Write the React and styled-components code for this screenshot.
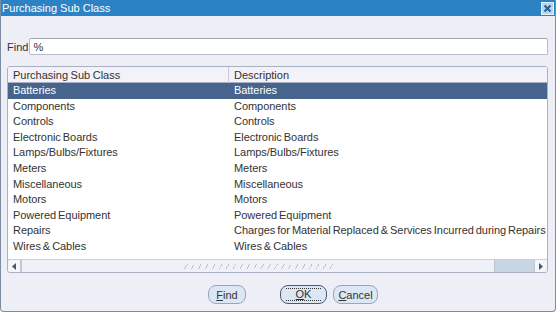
import React from "react";
import styled, { createGlobalStyle } from "styled-components";

const Global = createGlobalStyle`
  html, body { margin: 0; padding: 0; background: #ffffff; }
  body { font-family: "Liberation Sans", Arial, sans-serif; }
`;

const Window = styled.div`
  width: 556px;
  height: 312px;
  box-sizing: border-box;
  display: flex;
  flex-direction: column;
  background: #eeeef6;
  border: 1px solid #7d8ca0;
  border-top: none;
  border-radius: 0 0 4px 4px;
  overflow: hidden;
`;

const TitleBar = styled.div`
  height: 16px;
  flex: none;
  background: #2b83c6;
  color: #ffffff;
  font-size: 11px;
  display: flex;
  align-items: center;
  justify-content: space-between;
  padding: 0 1px 0 2px;
  margin-left: -1px;
  margin-right: -1px;
`;

const Close = styled.div`
  width: 11px;
  height: 11px;
  border: 1px solid #e8f0f8;
  background: #b9d6ee;
  display: flex;
  align-items: center;
  justify-content: center;
  margin-right: 1px;
`;

const FindRow = styled.div`
  display: flex;
  align-items: center;
  margin: 22px 0 0 6px;
  gap: 1px;
  font-size: 11px;
  color: #333333;
`;

const FindInput = styled.div`
  width: 519px;
  height: 17px;
  box-sizing: border-box;
  background: #ffffff;
  border: 1px solid #b8bcc8;
  border-top-color: #9ea4b2;
  border-radius: 2px;
  font-size: 11px;
  padding: 2px 3px;
  color: #333333;
`;

const Table = styled.div`
  margin: 11px 0 0 6px;
  width: 541px;
  height: 207px;
  box-sizing: border-box;
  border: 1px solid #a9b1c2;
  border-radius: 3px;
  background: #ffffff;
  display: flex;
  flex-direction: column;
  overflow: hidden;
`;

const Header = styled.div`
  display: grid;
  grid-template-columns: 221px 1fr;
  height: 16px;
  flex: none;
  background: #f2f2f8;
  border-bottom: 1px solid #a9b1c2;
  box-sizing: border-box;
`;

const HeaderCell = styled.div`
  font-size: 11px;
  color: #333333;
  padding-left: 5px;
  line-height: 16px;
  word-spacing: -0.5px;
  border-right: ${(p) => (p.$divider ? "1px solid #c8ccd8" : "none")};
`;

const Rows = styled.div`
  flex: 1;
  display: flex;
  flex-direction: column;
`;

const Row = styled.div`
  display: grid;
  grid-template-columns: 221px 1fr;
  height: 15.6px;
  flex: none;
  background: ${(p) => (p.$selected ? "#46648c" : "transparent")};
  color: ${(p) => (p.$selected ? "#ffffff" : "#333333")};
  font-size: 11px;
  line-height: 15.6px;
`;

const Cell = styled.div`
  padding-left: 5px;
  white-space: nowrap;
  overflow: hidden;
  word-spacing: -1px;
  letter-spacing: -0.05px;
`;

const ScrollBar = styled.div`
  height: 13px;
  flex: none;
  display: flex;
  border-top: 1px solid #c9d2e0;
  background: #e9edf5;
  box-sizing: border-box;
`;

const Arrow = styled.div`
  width: 12px;
  flex: none;
  display: flex;
  align-items: center;
  justify-content: center;
  background: #f4f6fa;
  border-right: ${(p) => (p.$left ? "2px solid #c0c8d6" : "none")};
  border-left: ${(p) => (p.$left ? "none" : "1px solid #c0c8d6")};
  border-radius: ${(p) => (p.$left ? "4px 0 0 4px" : "0 4px 4px 0")};
`;

const Thumb = styled.div`
  width: 472px;
  flex: none;
  background: #eef1f7;
  display: flex;
  align-items: center;
  justify-content: center;
  border-right: 1px solid #b8c4d4;
`;

const Grip = styled.div`
  width: 152px;
  height: 5px;
  margin-left: 4px;
  background-image: repeating-linear-gradient(
    120deg,
    transparent 0px,
    transparent 2.5px,
    #b8c0cc 2.5px,
    #b8c0cc 3.3px,
    transparent 3.3px,
    transparent 6px
  );
`;

const Track = styled.div`
  flex: 1;
  background: #c8d5e5;
`;

const ButtonRow = styled.div`
  display: flex;
  align-items: center;
  margin: 12px 0 0 207px;
`;

const Button = styled.div`
  height: 19px;
  box-sizing: border-box;
  width: ${(p) => p.$w}px;
  margin-left: ${(p) => p.$ml || 0}px;
  border: 1px solid ${(p) => (p.$default ? "#4a5a70" : "#9aa6b8")};
  border-radius: 8px;
  background: #dbe7f4;
  font-size: 11px;
  color: #333333;
  display: flex;
  align-items: center;
  justify-content: center;
`;

const FocusRing = styled.span`
  border-top: 1px dotted #333;
  border-bottom: 1px dotted #333;
  padding: 0 10px;
  line-height: 11px;
`;

const U = styled.span`
  text-decoration: underline;
`;

const rows = [
  ["Batteries", "Batteries"],
  ["Components", "Components"],
  ["Controls", "Controls"],
  ["Electronic Boards", "Electronic Boards"],
  ["Lamps/Bulbs/Fixtures", "Lamps/Bulbs/Fixtures"],
  ["Meters", "Meters"],
  ["Miscellaneous", "Miscellaneous"],
  ["Motors", "Motors"],
  ["Powered Equipment", "Powered Equipment"],
  ["Repairs", "Charges for Material Replaced & Services Incurred during Repairs"],
  ["Wires & Cables", "Wires & Cables"],
];

export default function App() {
  return (
    <>
      <Global />
      <Window>
        <TitleBar>
          <span>Purchasing Sub Class</span>
          <Close>
            <svg width="9" height="9" viewBox="0 0 9 9">
              <path d="M1.5 1.5 L7.5 7.5 M7.5 1.5 L1.5 7.5" stroke="#2a5f92" strokeWidth="2" />
            </svg>
          </Close>
        </TitleBar>
        <FindRow>
          <span>Find</span>
          <FindInput>%</FindInput>
        </FindRow>
        <Table>
          <Header>
            <HeaderCell $divider>Purchasing Sub Class</HeaderCell>
            <HeaderCell>Description</HeaderCell>
          </Header>
          <Rows>
            {rows.map(([a, b], i) => (
              <Row key={a} $selected={i === 0}>
                <Cell>{a}</Cell>
                <Cell>{b}</Cell>
              </Row>
            ))}
          </Rows>
          <ScrollBar>
            <Arrow $left>
              <svg width="4" height="7" viewBox="0 0 4 7">
                <path d="M4 0 L0 3.5 L4 7 Z" fill="#4a5568" />
              </svg>
            </Arrow>
            <Thumb>
              <Grip />
            </Thumb>
            <Track />
            <Arrow>
              <svg width="4" height="7" viewBox="0 0 4 7">
                <path d="M0 0 L4 3.5 L0 7 Z" fill="#4a5568" />
              </svg>
            </Arrow>
          </ScrollBar>
        </Table>
        <ButtonRow>
          <Button $w={38}>
            <span><U>F</U>ind</span>
          </Button>
          <Button $w={47} $ml={34} $default>
            <FocusRing><U>O</U>K</FocusRing>
          </Button>
          <Button $w={45} $ml={6}>
            <span><U>C</U>ancel</span>
          </Button>
        </ButtonRow>
      </Window>
    </>
  );
}
